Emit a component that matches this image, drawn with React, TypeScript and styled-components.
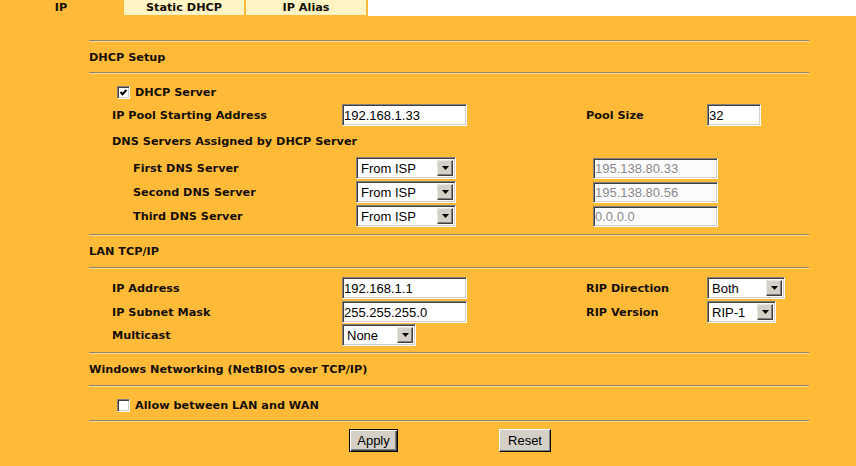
import React from 'react'
import styled, { createGlobalStyle } from 'styled-components'

const ORANGE = '#ffbb38'

const GlobalStyle = createGlobalStyle`
  html, body {
    margin: 0;
    padding: 0;
    background: ${ORANGE};
  }
  body {
    font-family: 'DejaVu Sans', Verdana, sans-serif;
    font-size: 11.25px;
    font-weight: bold;
    color: #140e04;
  }
`

const Page = styled.div`
  width: 856px;
  min-height: 466px;
  background: ${ORANGE};
`

const TabBar = styled.div`
  display: flex;
  height: 16px;
  background: #fff;
`

const Tab = styled.div<{ $active?: boolean; $w: number }>`
  width: ${p => p.$w}px;
  height: 15px;
  line-height: 15px;
  text-align: center;
  background: ${p => (p.$active ? ORANGE : '#fff5c4')};
  border-right: 2px solid ${ORANGE};
  border-bottom: 1px solid ${ORANGE};
`

const Content = styled.div`
  margin-left: 89px;
  width: 720px;
  padding-top: 24px;
`

const Rule = styled.div`
  height: 0;
  border-top: 1px solid #8d8672;
  border-bottom: 1px solid #ffd98a;
`

const SectionTitle = styled.div<{ $h: number }>`
  height: ${p => p.$h}px;
  display: flex;
  align-items: center;
`

const Body = styled.div<{ $top: number; $bottom: number }>`
  padding: ${p => p.$top}px 0 ${p => p.$bottom}px;
`

const Row = styled.div<{ $h: number; $indent: number; $cols?: string }>`
  display: grid;
  grid-template-columns: ${p => p.$cols || '1fr'};
  align-items: center;
  height: ${p => p.$h}px;
  padding-left: ${p => p.$indent}px;
`

const CheckLabel = styled.label`
  display: flex;
  align-items: center;
  gap: 5px;
`

const CheckBox = styled.span`
  width: 13px;
  height: 13px;
  box-sizing: border-box;
  background: #fff;
  border: 1px solid;
  border-color: #808080 #fff #fff #808080;
  box-shadow: inset 1px 1px 0 #404040, inset -1px -1px 0 #d4d0c8;
  display: flex;
  align-items: center;
  justify-content: center;
`

const TextInput = styled.input<{ $w: number; $h?: number }>`
  width: ${p => p.$w}px;
  height: ${p => p.$h || 22}px;
  box-sizing: border-box;
  margin: 0;
  padding: 0 1px;
  font: 400 13px 'Liberation Sans', Arial, sans-serif;
  color: #000;
  background: #fff;
  border: 1px solid;
  border-color: #808080 #fff #fff #808080;
  box-shadow: inset 1px 1px 0 #404040, inset -1px -1px 0 #d4d0c8;
  outline: none;

  &:disabled {
    color: #8a8a8a;
    background: #fcfcfc;
  }
`

const SelectBox = styled.div<{ $w: number }>`
  display: flex;
  align-items: center;
  width: ${p => p.$w}px;
  height: 22px;
  box-sizing: border-box;
  padding: 2px;
  background: #fff;
  border: 1px solid;
  border-color: #808080 #fff #fff #808080;
  box-shadow: inset 1px 1px 0 #404040, inset -1px -1px 0 #d4d0c8;
`

const SelectValue = styled.span`
  flex: 1;
  padding-left: 2px;
  font: 400 13px 'Liberation Sans', Arial, sans-serif;
  color: #000;
`

const ArrowButton = styled.span`
  width: 16px;
  height: 16px;
  box-sizing: border-box;
  background: #d4d0c8;
  border: 1px solid;
  border-color: #e8e6e0 #404040 #404040 #e8e6e0;
  box-shadow: inset -1px -1px 0 #808080;
  display: flex;
  align-items: center;
  justify-content: center;
`

const ButtonRow = styled.div`
  display: flex;
  gap: 101px;
  padding: 7px 0 0 260px;
`

const Button = styled.button<{ $default?: boolean; $w: number }>`
  width: ${p => p.$w}px;
  height: 23px;
  margin: 0;
  padding: 0;
  font: 400 13px 'Liberation Sans', Arial, sans-serif;
  color: #000;
  background: #d4d0c8;
  border: 1px solid ${p => (p.$default ? '#000' : '#fff')};
  border-right-color: #000;
  border-bottom-color: #000;
  box-shadow: ${p =>
    p.$default
      ? 'inset 1px 1px 0 #fff, inset -1px -1px 0 #404040, inset -2px -2px 0 #808080'
      : 'inset -1px -1px 0 #808080'};
`

const Select = ({ value, width }: { value: string; width: number }) => (
  <SelectBox $w={width}>
    <SelectValue>{value}</SelectValue>
    <ArrowButton>
      <svg width="7" height="4" viewBox="0 0 7 4">
        <polygon points="0,0 7,0 3.5,4" fill="#000" />
      </svg>
    </ArrowButton>
  </SelectBox>
)

const Check = ({ checked, label }: { checked?: boolean; label: string }) => (
  <CheckLabel>
    <CheckBox>
      {checked && (
        <svg width="7" height="7" viewBox="0 0 7 7">
          <polyline points="0.5,3 2.5,5.3 6.5,1" fill="none" stroke="#000" strokeWidth="2.1" />
        </svg>
      )}
    </CheckBox>
    {label}
  </CheckLabel>
)

const dnsRows = [
  { label: 'First DNS Server', ip: '195.138.80.33' },
  { label: 'Second DNS Server', ip: '195.138.80.56' },
  { label: 'Third DNS Server', ip: '0.0.0.0' },
]

const FOUR_COLS = '230px 244px 121px 1fr'

export default function App() {
  return (
    <Page>
      <GlobalStyle />
      <TabBar>
        <Tab $active $w={122}>IP</Tab>
        <Tab $w={120}>Static DHCP</Tab>
        <Tab $w={120}>IP Alias</Tab>
      </TabBar>

      <Content>
        <Rule />
        <SectionTitle $h={30}>DHCP Setup</SectionTitle>
        <Rule />
        <Body $top={7} $bottom={6}>
          <Row $h={22} $indent={28}>
            <Check checked label="DHCP Server" />
          </Row>
          <Row $h={24} $indent={23} $cols={FOUR_COLS}>
            <span>IP Pool Starting Address</span>
            <TextInput $w={125} readOnly value="192.168.1.33" />
            <span>Pool Size</span>
            <TextInput $w={54} readOnly value="32" />
          </Row>
          <Row $h={29} $indent={23}>
            DNS Servers Assigned by DHCP Server
          </Row>
          {dnsRows.map(r => (
            <Row key={r.label} $h={24} $indent={44} $cols="223px 237px 1fr">
              <span>{r.label}</span>
              <Select value="From ISP" width={100} />
              <TextInput $w={125} $h={21} disabled value={r.ip} />
            </Row>
          ))}
        </Body>

        <Rule />
        <SectionTitle $h={31}>LAN TCP/IP</SectionTitle>
        <Rule />
        <Body $top={7} $bottom={6}>
          <Row $h={24} $indent={23} $cols={FOUR_COLS}>
            <span>IP Address</span>
            <TextInput $w={125} readOnly value="192.168.1.1" />
            <span>RIP Direction</span>
            <Select value="Both" width={78} />
          </Row>
          <Row $h={24} $indent={23} $cols={FOUR_COLS}>
            <span>IP Subnet Mask</span>
            <TextInput $w={125} readOnly value="255.255.255.0" />
            <span>RIP Version</span>
            <Select value="RIP-1" width={69} />
          </Row>
          <Row $h={22} $indent={23} $cols={FOUR_COLS}>
            <span>Multicast</span>
            <Select value="None" width={74} />
          </Row>
        </Body>

        <Rule />
        <SectionTitle $h={31}>Windows Networking (NetBIOS over TCP/IP)</SectionTitle>
        <Rule />
        <Body $top={7} $bottom={4}>
          <Row $h={22} $indent={28}>
            <Check label="Allow between LAN and WAN" />
          </Row>
        </Body>
        <Rule />

        <ButtonRow>
          <Button $default $w={49}>Apply</Button>
          <Button $w={52}>Reset</Button>
        </ButtonRow>
      </Content>
    </Page>
  )
}
